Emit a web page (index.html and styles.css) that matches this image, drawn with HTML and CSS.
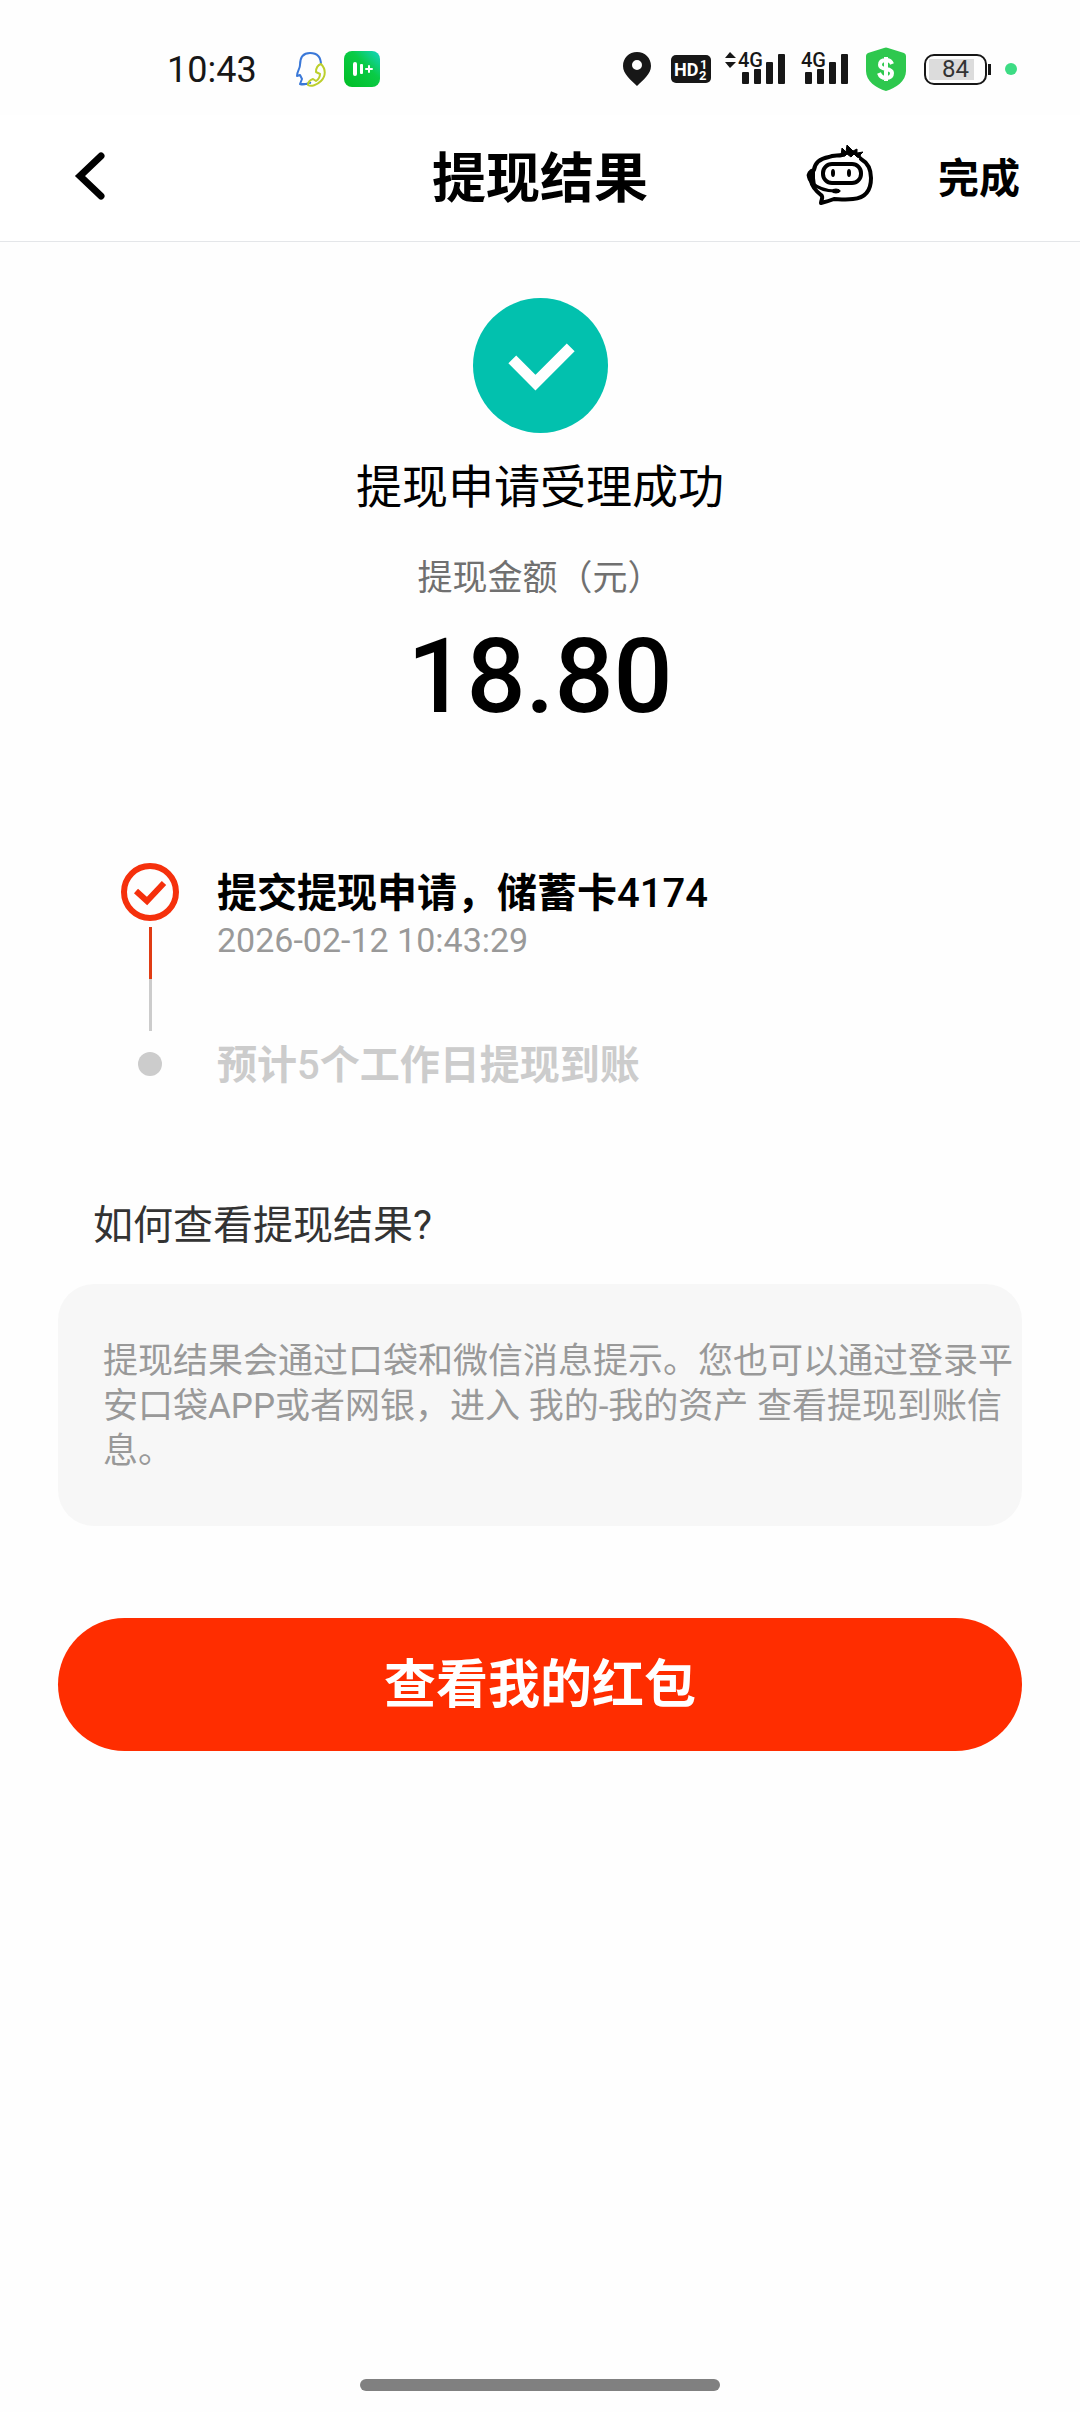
FILE: index.html
```html
<!DOCTYPE html>
<html lang="zh-CN">
<head>
<meta charset="utf-8">
<meta name="viewport" content="width=device-width, initial-scale=1">
<title>提现结果</title>
<link rel="stylesheet" href="styles.css">
</head>
<body>
<div class="page">
  <div class="status-bar">
    <span class="clock">10:43</span>
    <div class="status-notices">
      <svg width="30" height="36" viewBox="0 0 30 36" fill="none" stroke-width="2" stroke-linejoin="round">
        <path d="M25 14C25 6 21 2 14 2S4 7 4 14C4 18 1 20 1 25L4 24L6 28L4 33H12" stroke="#3a78d8"/>
        <path d="M4 33C9 35 12 31 15 32" stroke="#3a78d8"/>
        <path d="M25 13C30 18 30 25 25 30C21 34 15 36 12 34C12 31 14 29 17 28L20 30C23 28 24 26 24 23L20 21C20 17 22 14 25 13Z" stroke="#bccf2c"/>
      </svg>
      <svg width="36" height="36" viewBox="0 0 36 36">
        <defs><linearGradient id="app-green" x1="0" y1="1" x2="1" y2="0"><stop offset="0" stop-color="#00bd24"/><stop offset=".6" stop-color="#0acb46"/><stop offset="1" stop-color="#14d4c4"/></linearGradient></defs>
        <rect width="36" height="36" rx="8" fill="url(#app-green)"/>
        <rect x="9" y="11" width="4" height="14" rx="2" fill="#fff"/>
        <rect x="16" y="13" width="3" height="10" rx="1" fill="#fff"/>
        <path d="M25 15V21M22 18H28" stroke="#fff" stroke-width="2" stroke-linecap="round"/>
      </svg>
    </div>
    <div class="status-system">
      <svg class="pin" width="28" height="34" viewBox="0 0 28 34">
        <path fill="#171717" fill-rule="evenodd" d="M14 0C6 0 0 6 0 14C0 22 8 28 14 34C20 28 28 22 28 14C28 6 22 0 14 0ZM14 8A5 5 0 1 1 14 18A5 5 0 1 1 14 8Z"/>
      </svg>
      <svg class="hd" width="40" height="28" viewBox="0 0 40 28">
        <rect width="40" height="28" rx="5" fill="#171717"/>
        <text class="hd-text" x="3" y="21">HD</text>
        <text class="hd-num" x="29" y="14">1</text>
        <text class="hd-num" x="28" y="25">2</text>
      </svg>
      <svg class="signal" width="60" height="34" viewBox="0 0 60 34" fill="#171717">
        <path d="M5 0L11 6H0ZM0 10H11L5 16Z"/>
        <text class="net" x="13" y="15">4G</text>
        <rect x="17" y="20" width="7" height="12" rx="1"/><rect x="29" y="17" width="7" height="15" rx="1"/><rect x="41" y="10" width="7" height="22" rx="1"/><rect x="53" y="2" width="7" height="30" rx="1"/>
      </svg>
      <svg class="signal-2" width="47" height="34" viewBox="0 0 47 34" fill="#171717">
        <text class="net" x="0" y="15">4G</text>
        <rect x="4" y="20" width="7" height="12" rx="1"/><rect x="16" y="17" width="7" height="15" rx="1"/><rect x="28" y="10" width="7" height="22" rx="1"/><rect x="40" y="2" width="7" height="30" rx="1"/>
      </svg>
      <svg class="shield" width="40" height="44" viewBox="0 0 40 44">
        <path d="M18 1Q20 0 22 1L38 6Q40 7 40 9V24C40 34 30 41 20 44C10 41 0 34 0 24V9Q0 7 2 6Z" fill="#2ec84e"/>
        <path d="M26 17C25 14 23 13 20 13C16 13 14 15 14 18C14 24 26 20 26 26C26 29 24 31 20 31C16 31 14 29 13 26M20 10V34" fill="none" stroke="#fff" stroke-width="4"/>
      </svg>
      <div class="battery"><span class="battery-level">84</span></div>
      <span class="battery-tip"></span>
      <span class="privacy-dot"></span>
    </div>
  </div>

  <header class="nav">
    <button class="nav-button back" type="button" aria-label="返回">
      <svg width="30" height="48" viewBox="0 0 30 48" fill="none" stroke="#000" stroke-width="7" stroke-linecap="round"><path d="M26 4L5 24L26 44"/></svg>
    </button>
    <h1 class="nav-title">提现结果</h1>
    <div class="nav-actions">
      <button class="nav-button service" type="button" aria-label="客服">
        <svg width="66" height="60" viewBox="0 0 66 60" fill="none" stroke="#000" stroke-width="4" stroke-linejoin="round" stroke-linecap="round">
          <path d="M7 25C8 16 16 13 22 12C26 10 31 11 35 10"/>
          <path d="M54 14C61 18 64 25 64 33C64 46 58 53 46 54C38 55 31 54 27 54C22 56 18 57 14 58C14 55 17 52 14 50C9 46 5 42 4 36"/>
          <path d="M34 11L35 3L39 7L40 0L46 6L50 4L50 8L56 7L53 10L55 14L50 12L47 9L44 12L40 9L38 11Z" fill="#000" stroke-width="1"/>
          <path d="M7 24C2 25 0 29 1 32C2 37 5 39 8 41L7 33Z" fill="#000" stroke-width="2"/>
          <path d="M5 38C12 44 20 46 28 46" stroke-width="3"/>
          <ellipse cx="29" cy="46" rx="4" ry="2" fill="#000" stroke-width="1"/>
          <rect x="16" y="19" width="38" height="19" rx="9"/>
          <ellipse cx="26" cy="28" rx="2" ry="4" fill="#000" stroke="none"/>
          <ellipse cx="42" cy="28" rx="2" ry="4" fill="#000" stroke="none"/>
        </svg>
      </button>
      <button class="nav-button done" type="button">完成</button>
    </div>
  </header>

  <main class="content">
    <section class="result">
      <svg class="result-icon" width="135" height="135" viewBox="0 0 134 134">
        <circle cx="67" cy="67" r="67" fill="#02c1ae"/>
        <path d="M39 61L62 84L97 49" fill="none" stroke="#fff" stroke-width="11"/>
      </svg>
      <h2 class="result-title">提现申请受理成功</h2>
      <p class="amount-label">提现金额（元）</p>
      <p class="amount">18.80</p>
    </section>

    <ol class="steps">
      <li class="step">
        <div class="step-mark">
          <svg width="58" height="58" viewBox="0 0 58 58" fill="none" stroke="#f5300c">
            <circle cx="29" cy="29" r="26" stroke-width="6"/>
            <path d="M15 28L26 38L43 20" stroke-width="6"/>
          </svg>
          <span class="step-line"></span>
        </div>
        <div class="step-body">
          <p class="step-title">提交提现申请，储蓄卡<span class="digits">4174</span></p>
          <time class="step-time" datetime="2026-02-12T10:43:29">2026-02-12 10:43:29</time>
        </div>
      </li>
      <li class="step pending">
        <div class="step-mark"><span class="step-dot"></span></div>
        <div class="step-body">
          <p class="step-title">预计<span class="digits">5</span>个工作日提现到账</p>
        </div>
      </li>
    </ol>

    <h3 class="help-title">如何查看提现结果?</h3>
    <p class="help-box">提现结果会通过口袋和微信消息提示。您也可以通过登录平安口袋APP或者网银，进入 我的-我的资产 查看提现到账信息。</p>
    <button class="primary" type="button">查看我的红包</button>
  </main>

  <div class="home-bar"></div>
</div>
</body>
</html>
```
FILE: styles.css
```css
* {
  box-sizing: border-box;
}

body,
h1,
h2,
h3,
p,
ol {
  margin: 0;
  padding: 0;
}

body {
  background: #fefefe;
  color: #000;
  font-family: Roboto, "Noto Sans CJK SC", sans-serif;
}

svg {
  display: block;
  flex: none;
  overflow: visible;
}

button {
  border: 0;
  padding: 0;
  font-family: inherit;
  cursor: pointer;
}

.page {
  display: flex;
  flex-direction: column;
  min-height: 100vh;
}

/* Status bar */
.status-bar {
  display: flex;
  align-items: center;
  height: 115px;
  padding: 23px 63px 0 167px;
  color: #171717;
}

.clock {
  padding-top: 2px;
  font-size: 36px;
  line-height: 40px;
}

.status-notices {
  display: flex;
  gap: 18px;
  margin-left: 39px;
}

.status-system {
  display: flex;
  align-items: center;
  margin-left: auto;
}

.hd {
  margin-left: 20px;
}

.signal {
  margin-left: 14px;
}

.signal-2 {
  margin-left: 16px;
}

.shield {
  margin-left: 18px;
}

.hd-text,
.hd-num {
  fill: #fff;
  font-size: 18px;
  font-weight: 700;
}

.hd-num {
  font-size: 13px;
}

.net {
  font-size: 20px;
  font-weight: 500;
}

.battery {
  width: 63px;
  height: 31px;
  margin-left: 18px;
  padding: 3px;
  border: 2px solid #171717;
  border-radius: 10px;
}

.battery-level {
  display: block;
  width: 45px;
  padding-left: 13px;
  background: #dcdcdc;
  color: #333;
  font-size: 24px;
  line-height: 21px;
}

.battery-tip {
  width: 3px;
  height: 11px;
  margin-left: 1px;
  background: #171717;
}

.privacy-dot {
  width: 12px;
  height: 12px;
  margin-left: 14px;
  border-radius: 50%;
  background: #3ddc84;
}

/* Navigation */
.nav {
  display: grid;
  grid-template-columns: 1fr auto 1fr;
  align-items: center;
  height: 127px;
  padding: 0 60px;
  border-bottom: 1px solid #e4e6e9;
  background: #fff;
}

.nav-button {
  background: none;
  color: #000;
}

.back {
  justify-self: start;
  padding: 0 15px 4px;
}

.nav-title {
  padding-top: 4px;
  font-size: 54px;
  font-weight: 700;
  line-height: 72px;
}

.nav-actions {
  display: flex;
  align-items: center;
  justify-content: flex-end;
  gap: 65px;
}

.service {
  padding-bottom: 6px;
}

.done {
  padding-top: 2px;
  font-size: 41px;
  font-weight: 700;
  line-height: 58px;
}

/* Result */
.content {
  padding: 56px 58px;
}

.result {
  display: flex;
  flex-direction: column;
  align-items: center;
}

.result-title {
  margin-top: 25px;
  font-size: 46px;
  font-weight: 400;
  line-height: 58px;
}

.amount-label {
  margin-top: 40px;
  color: #707070;
  font-size: 35px;
  line-height: 45px;
}

.amount {
  margin-top: 20px;
  font-size: 104px;
  font-weight: 500;
  line-height: 112px;
}

/* Progress steps */
.steps {
  margin: 130px 63px 0;
  list-style: none;
}

.step {
  display: flex;
  gap: 38px;
  min-height: 172px;
}

.step-mark {
  display: flex;
  flex: none;
  flex-direction: column;
  align-items: center;
  width: 58px;
}

.step-line {
  width: 3px;
  height: 104px;
  margin-top: 6px;
  background: linear-gradient(#e03c14 50%, #ccc 50%);
}

.step-body {
  padding-top: 3px;
}

.step-title {
  font-size: 40px;
  font-weight: 700;
  line-height: 55px;
}

.digits {
  font-weight: 500;
}

.step-time {
  display: block;
  color: #999;
  font-size: 34px;
  line-height: 38px;
}

.pending {
  min-height: 58px;
  color: #ccc;
}

.pending .step-mark {
  justify-content: center;
}

.step-dot {
  width: 24px;
  height: 24px;
  border-radius: 50%;
  background: #ccc;
}

/* Help */
.help-title {
  margin: 109px 35px 0;
  color: #333;
  font-size: 40px;
  font-weight: 400;
  line-height: 48px;
}

.help-box {
  margin-top: 34px;
  padding: 55px 8px 52px 45px;
  border-radius: 36px;
  background: #f7f7f7;
  color: #999;
  font-size: 35px;
  line-height: 45px;
}

.primary {
  display: block;
  width: 100%;
  margin-top: 92px;
  padding: 31px 30px 29px;
  border-radius: 68px;
  background: #ff2d00;
  color: #fff;
  font-size: 52px;
  font-weight: 700;
  line-height: 73px;
}

.home-bar {
  width: 33.33%;
  height: 12px;
  margin: auto auto 21px;
  border-radius: 6px;
  background: #808080;
}
```
